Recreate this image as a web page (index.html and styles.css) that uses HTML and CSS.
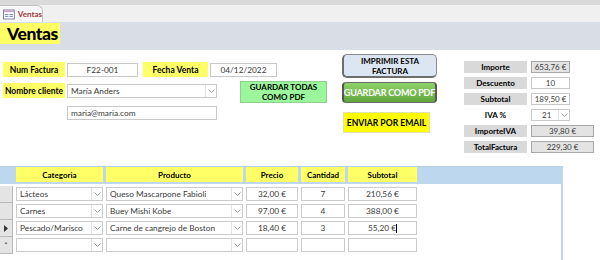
FILE: index.html
```html
<!DOCTYPE html>
<html>
<head>
<meta charset="utf-8">
<link rel="stylesheet" href="styles.css">
</head>
<body>
<div class="tabstrip">
  <div class="tab">
    <svg class="tab-icon" width="13" height="11" viewBox="0 0 13 11">
      <rect x="0.5" y="0.5" width="12" height="10" fill="#fff" stroke="#7a7a9a"/>
      <rect x="1" y="1" width="11" height="2" fill="#c9a3c9"/>
      <rect x="2" y="5" width="4" height="1" fill="#6a7fb0"/>
      <rect x="7" y="5" width="4" height="1" fill="#6a7fb0"/>
      <rect x="2" y="7" width="4" height="1" fill="#6a7fb0"/>
      <rect x="7" y="7" width="4" height="1" fill="#6a7fb0"/>
    </svg>
    <span class="tab-label">Ventas</span>
  </div>
</div>
<div class="header"><div class="title">Ventas</div></div>

<div class="main">
  <div class="left">
    <div class="row">
      <div class="lbl lbl-a">Num Factura</div>
      <div class="field center w71">F22-001</div>
      <div class="lbl lbl-b">Fecha Venta</div>
      <div class="field center w67">04/12/2022</div>
    </div>
    <div class="row row2">
      <div class="lbl lbl-a">Nombre cliente</div>
      <div class="stack">
        <div class="field combo w150"><span class="val">María Anders</span><span class="drop"><svg width="7" height="4" viewBox="0 0 7 4"><polyline points="0.5,0.5 3.5,3.5 6.5,0.5" fill="none" stroke="#9a9a9a"/></svg></span></div>
        <div class="field w150">maria@maria.com</div>
      </div>
      <div class="btn btn-lightgreen">GUARDAR TODAS<br>COMO PDF</div>
    </div>
  </div>
  <div class="mid">
    <div class="btn btn-print">IMPRIMIR ESTA<br>FACTURA</div>
    <div class="btn btn-pdf">GUARDAR COMO PDF</div>
    <div class="btn btn-mail">ENVIAR POR EMAIL</div>
  </div>
  <div class="totals">
    <div class="tlbl">Importe</div><div class="tval gray w39">653,76 €</div>
    <div class="tlbl">Descuento</div><div class="tval w39">10</div>
    <div class="tlbl">Subtotal</div><div class="tval w39">189,50 €</div>
    <div class="tlbl plain">IVA %</div><div class="tval combo w39"><span class="val">21</span><span class="drop"><svg width="7" height="4" viewBox="0 0 7 4"><polyline points="0.5,0.5 3.5,3.5 6.5,0.5" fill="none" stroke="#9a9a9a"/></svg></span></div>
    <div class="tlbl">ImporteIVA</div><div class="tval gray w63">39,80 €</div>
    <div class="tlbl">TotalFactura</div><div class="tval gray w63">229,30 €</div>
  </div>
</div>

<div class="subform">
  <div class="sub-head">
    <div></div>
    <div class="hcell">Categoria</div>
    <div class="hcell">Producto</div>
    <div class="hcell">Precio</div>
    <div class="hcell">Cantidad</div>
    <div class="hcell">Subtotal</div>
  </div>
  <div class="sub-body">
    <div class="srow">
      <div class="sel"></div>
      <div class="cell combo"><span class="val">Lácteos</span><span class="drop"><svg width="7" height="4" viewBox="0 0 7 4"><polyline points="0.5,0.5 3.5,3.5 6.5,0.5" fill="none" stroke="#9a9a9a"/></svg></span></div>
      <div class="cell combo"><span class="val">Queso Mascarpone Fabioli</span><span class="drop"><svg width="7" height="4" viewBox="0 0 7 4"><polyline points="0.5,0.5 3.5,3.5 6.5,0.5" fill="none" stroke="#9a9a9a"/></svg></span></div>
      <div class="cell center">32,00 €</div>
      <div class="cell center">7</div>
      <div class="cell center">210,56 €</div>
    </div>
    <div class="srow">
      <div class="sel"></div>
      <div class="cell combo"><span class="val">Carnes</span><span class="drop"><svg width="7" height="4" viewBox="0 0 7 4"><polyline points="0.5,0.5 3.5,3.5 6.5,0.5" fill="none" stroke="#9a9a9a"/></svg></span></div>
      <div class="cell combo"><span class="val">Buey Mishi Kobe</span><span class="drop"><svg width="7" height="4" viewBox="0 0 7 4"><polyline points="0.5,0.5 3.5,3.5 6.5,0.5" fill="none" stroke="#9a9a9a"/></svg></span></div>
      <div class="cell center">97,00 €</div>
      <div class="cell center">4</div>
      <div class="cell center">388,00 €</div>
    </div>
    <div class="srow">
      <div class="sel"><svg width="4" height="7" viewBox="0 0 4 7"><polygon points="0,0 4,3.5 0,7" fill="#333"/></svg></div>
      <div class="cell combo"><span class="val">Pescado/Marisco</span><span class="drop"><svg width="7" height="4" viewBox="0 0 7 4"><polyline points="0.5,0.5 3.5,3.5 6.5,0.5" fill="none" stroke="#9a9a9a"/></svg></span></div>
      <div class="cell combo"><span class="val">Carne de cangrejo de Boston</span><span class="drop"><svg width="7" height="4" viewBox="0 0 7 4"><polyline points="0.5,0.5 3.5,3.5 6.5,0.5" fill="none" stroke="#9a9a9a"/></svg></span></div>
      <div class="cell center">18,40 €</div>
      <div class="cell center">3</div>
      <div class="cell center"><span>55,20 €</span><span class="caret"></span></div>
    </div>
    <div class="srow">
      <div class="sel star">*</div>
      <div class="cell combo"><span class="val"></span><span class="drop"><svg width="7" height="4" viewBox="0 0 7 4"><polyline points="0.5,0.5 3.5,3.5 6.5,0.5" fill="none" stroke="#9a9a9a"/></svg></span></div>
      <div class="cell combo"><span class="val"></span><span class="drop"><svg width="7" height="4" viewBox="0 0 7 4"><polyline points="0.5,0.5 3.5,3.5 6.5,0.5" fill="none" stroke="#9a9a9a"/></svg></span></div>
      <div class="cell"></div>
      <div class="cell"></div>
      <div class="cell"></div>
    </div>
  </div>
</div>
</body>
</html>
```

FILE: styles.css
```css
* { box-sizing: border-box; }
html, body { margin: 0; padding: 0; }
body {
  width: 600px;
  height: 260px;
  overflow: hidden;
  background: #fff;
  font-family: "Lato", "Liberation Sans", sans-serif;
  font-size: 8px;
  color: #000;
}

/* tab strip */
.tabstrip {
  height: 22px;
  background: #f0f0f0;
  border-top: 5px solid #dadada;
}
.tab {
  display: flex;
  align-items: center;
  gap: 3px;
  width: 43px;
  height: 17px;
  padding-left: 3px;
  background: #f8f8f8;
  border: 1px solid #c4c4c4;
  border-left: none;
  border-bottom: none;
  border-top-right-radius: 6px;
}
.tab-label { color: #a4373a; font-weight: bold; font-size: 8px; }

/* header */
.header { height: 28px; background: #d9dde6; padding-top: 1px; }
.title {
  width: 60px;
  height: 21px;
  background: #ffff66;
  font-weight: 900;
  font-size: 17.5px;
  letter-spacing: -0.4px;
  line-height: 21px;
  padding-left: 7px;
}

/* main */
.main { display: flex; height: 116px; }
.left { width: 327px; padding-left: 3px; padding-top: 12px; }
.row { display: flex; gap: 2px; }
.row2 { margin-top: 6px; }
.lbl {
  height: 15px;
  background: #ffff66;
  font-weight: bold;
  font-size: 8.5px;
  display: flex;
  align-items: center;
  justify-content: center;
  white-space: nowrap;
}
.lbl-a { width: 62px; }
.lbl-b { width: 65px; margin-left: 3px; }
.field {
  height: 14px;
  margin-top: 1px;
  border: 1px solid #c8c8c8;
  background: #fff;
  color: #3a3a3a;
  font-size: 8.3px;
  display: flex;
  align-items: center;
  padding: 0 3px;
  white-space: nowrap;
}
.center { justify-content: center; }
.w71 { width: 71px; }
.w67 { width: 67px; }
.w150 { width: 150px; }
.stack { display: flex; flex-direction: column; gap: 7px; }
.combo { padding-right: 0; justify-content: space-between; }
.combo .val { overflow: hidden; }
.drop {
  width: 11px;
  height: 100%;
  border-left: 1px solid #e2e2e2;
  display: flex;
  align-items: center;
  justify-content: center;
  flex-shrink: 0;
}

.btn {
  display: flex;
  align-items: center;
  justify-content: center;
  text-align: center;
  font-weight: bold;
  font-size: 8px;
  line-height: 10px;
  white-space: nowrap;
}
.btn-lightgreen {
  width: 87px;
  height: 22px;
  margin-left: 21px;
  margin-top: -2px;
  background: #9cf79c;
  border: 1px solid #8fd08f;
}

.mid {
  width: 95px;
  margin-left: 15px;
  padding-top: 4px;
  display: flex;
  flex-direction: column;
}
.btn-print {
  height: 24px;
  background: #dce6f2;
  border: 1px solid #8a8a8a;
  border-left: 2px solid #6d6d6d;
  border-bottom: 2px solid #6d6d6d;
  border-radius: 5px;
}
.btn-pdf {
  height: 21px;
  margin-top: 4px;
  color: #fff;
  font-size: 9px;
  letter-spacing: -0.2px;
  background: linear-gradient(#8fd26a, #5fa53c);
  border: 1px solid #6a6a6a;
  border-left: 2px solid #555;
  border-right: 2px solid #555;
  border-radius: 4px;
}
.btn-mail {
  width: 87px;
  height: 21px;
  margin-top: 9px;
  margin-left: 1px;
  font-size: 8.6px;
  background: #ffff00;
  border: 1px solid #e0e0b0;
}

.totals {
  margin-left: 27px;
  padding-top: 11px;
  display: grid;
  grid-template-columns: 63px auto;
  grid-template-rows: repeat(6, 12px);
  column-gap: 4px;
  row-gap: 4px;
  align-content: start;
}
.tlbl {
  background: #d9d9d9;
  font-weight: bold;
  font-size: 8px;
  display: flex;
  align-items: center;
  justify-content: center;
}
.tlbl.plain { background: transparent; }
.tval {
  border: 1px solid #c8c8c8;
  background: #fff;
  color: #3a3a3a;
  font-size: 8px;
  display: flex;
  align-items: center;
  justify-content: center;
  white-space: nowrap;
}
.tval.gray { background: #e3e3e3; border-color: #a8a8a8; }
.tval.combo { justify-content: space-between; padding-left: 10px; }
.w39 { width: 39px; }
.w63 { width: 63px; }

/* subform */
.subform {
  width: 563px;
  height: 94px;
  border-right: 2px solid #bfd2ee;
}
.sub-head {
  height: 18px;
  background: #bdd7ee;
  border-top: 1px solid #b3cde8;
  display: grid;
  grid-template-columns: 13px 87px 137px 52px 44px 69px;
  column-gap: 3px;
  align-items: start;
}
.hcell {
  height: 15px;
  background: #ffff66;
  font-weight: bold;
  font-size: 8px;
  display: flex;
  align-items: center;
  justify-content: center;
}
.sub-body { padding-top: 2px; }
.srow {
  display: grid;
  grid-template-columns: 13px 87px 137px 52px 44px 69px;
  column-gap: 3px;
  height: 17px;
  align-items: start;
}
.sel {
  height: 17px;
  background: #e4e4e4;
  border-right: 1px solid #b8b8b8;
  border-bottom: 1px solid #b8b8b8;
  display: flex;
  align-items: center;
  justify-content: center;
  font-size: 8px;
  color: #555;
}
.cell {
  height: 14px;
  margin-top: 1px;
  border: 1px solid #cbcbcb;
  background: #fff;
  color: #3a3a3a;
  font-size: 8.3px;
  display: flex;
  align-items: center;
  padding: 0 3px;
  white-space: nowrap;
}
.cell.combo { padding-right: 0; }
.caret { width: 1px; height: 9px; background: #000; }
```
